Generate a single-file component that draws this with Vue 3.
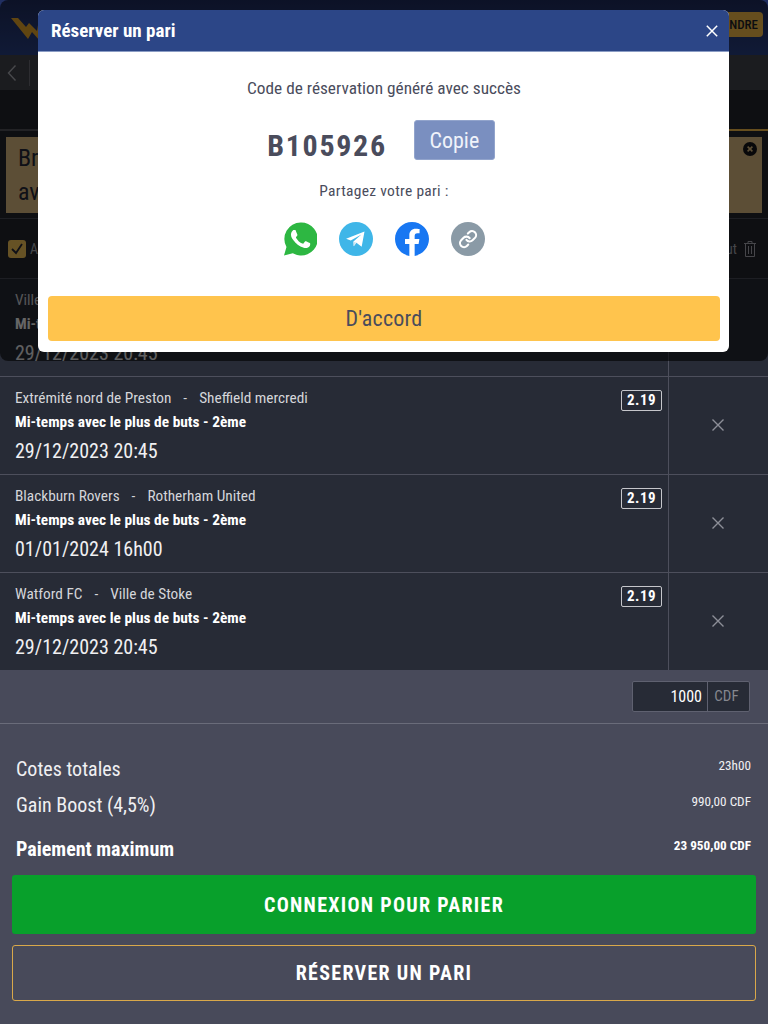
<script setup>
import {ref} from 'vue';

const bets = ref([
  {home: 'Ville de Stoke', away: 'Sheffield mercredi', date: '29/12/2023 20:45'},
  {home: 'Extrémité nord de Preston', away: 'Sheffield mercredi', date: '29/12/2023 20:45'},
  {home: 'Blackburn Rovers', away: 'Rotherham United', date: '01/01/2024 16h00'},
  {home: 'Watford FC', away: 'Ville de Stoke', date: '29/12/2023 20:45'},
]);

const stake = ref(1000);
</script>

<template>
  <div class="page">
    <header class="topbar">
      <svg class="logo" viewBox="0 0 40 24" width="40" height="24">
        <path d="M1 1h7l8 9 3-4 8 8 2-12h6l-5 22-8-9-4 7z" fill="#f0ac2c"/>
      </svg>
      <button class="join">REJOINDRE</button>
    </header>

    <div class="subbar">
      <svg class="back" viewBox="0 0 10 18" width="10" height="18">
        <path d="M8.500 1.500 1.500 9l7 7.500" fill="none" stroke="#b4b6bc" stroke-width="1.4"/>
      </svg>
      <span class="subbar__line"></span>
    </div>

    <div class="tabs">
      <div class="tab"></div>
      <div class="tab tab--active"></div>
    </div>

    <div class="notice-wrap">
      <div class="notice">
        <p>Bravo !<br>avec Boost</p>
        <svg class="notice__close" viewBox="0 0 14 14" width="14" height="14">
          <circle cx="7" cy="7" r="7" fill="#15151a"/>
          <path d="m4.600 4.600 4.800 4.800m0-4.800-4.800 4.800" stroke="#e6c387" stroke-width="1.600"/>
        </svg>
      </div>
    </div>

    <div class="options">
      <label class="accept">
        <span class="check">
          <svg viewBox="0 0 18 18" width="18" height="18">
            <path d="m4 9 4 4 6-9" fill="none" stroke="#27293a" stroke-width="1.800"/>
          </svg>
        </span>
        Accepter les changements
      </label>
      <span class="clear">
        Tout
        <svg viewBox="0 0 14 18" width="14" height="18" fill="none" stroke="#aeb0b8">
          <path d="M1 3.500h12M5 3.500V1.500h4v2M2.500 3.500v13h9v-13M5.500 6v8M8.500 6v8"/>
        </svg>
      </span>
    </div>

    <div class="bets">
      <div class="bet" v-for="(bet, i) in bets" :key="i">
        <div class="bet__main">
          <div class="bet__info">
            <div class="bet__teams">
              <span>{{ bet.home }}</span>
              <span>-</span>
              <span>{{ bet.away }}</span>
            </div>
            <div class="bet__market">Mi-temps avec le plus de buts - 2ème</div>
            <div class="bet__date">{{ bet.date }}</div>
          </div>
          <div class="odds">2.19</div>
        </div>
        <div class="bet__remove">
          <svg viewBox="0 0 14 14" width="14" height="14">
            <path d="m1.500 1.500 11 11m0-11-11 11" stroke="#8d8f98" stroke-width="1.400"/>
          </svg>
        </div>
      </div>
    </div>

    <div class="stake">
      <div class="stake__box">
        <span class="stake__value">{{ stake }}</span>
        <span class="stake__cur">CDF</span>
      </div>
    </div>

    <div class="summary">
      <div class="summary__row">
        <span>Cotes totales</span>
        <small>23h00</small>
      </div>
      <div class="summary__row">
        <span>Gain Boost (4,5%)</span>
        <small>990,00 CDF</small>
      </div>
      <div class="summary__row summary__row--bold">
        <span>Paiement maximum</span>
        <small>23 950,00 CDF</small>
      </div>
      <button class="btn btn--green">CONNEXION POUR PARIER</button>
      <button class="btn btn--outline">RÉSERVER UN PARI</button>
    </div>

    <div class="overlay"></div>

    <div class="modal">
      <div class="modal__head">
        <span>Réserver un pari</span>
        <svg viewBox="0 0 12 12" width="12" height="12">
          <path d="m.8.8 10.400 10.400m0-10.400L.8 11.200" stroke="#fff" stroke-width="1.500"/>
        </svg>
      </div>
      <div class="modal__body">
        <p class="modal__msg">Code de réservation généré avec succès</p>
        <div class="code">
          <span class="code__value">B105926</span>
          <button class="code__copy">Copie</button>
        </div>
        <p class="modal__share">Partagez votre pari :</p>
        <div class="socials">
          <svg viewBox="0 0 24 24" width="33" height="34">
            <path d="M12.100 0A12 12 0 0 0 1.800 17.900L0 24l6.400-1.700A12 12 0 1 0 12.100 0z" fill="#2db742"/>
            <path transform="translate(-1.900 -1.900) scale(1.160)" d="M17.472 14.382c-.297-.149-1.758-.867-2.03-.967-.273-.099-.471-.148-.67.15-.197.297-.767.966-.94 1.164-.173.199-.347.223-.644.075-.297-.15-1.255-.463-2.39-1.475-.883-.788-1.48-1.761-1.653-2.059-.173-.297-.018-.458.13-.606.134-.133.298-.347.446-.52.149-.174.198-.298.298-.497.099-.198.05-.371-.025-.52-.075-.149-.669-1.612-.916-2.207-.242-.579-.487-.5-.669-.51-.173-.008-.371-.01-.57-.01-.198 0-.52.074-.792.372-.272.297-1.04 1.016-1.04 2.479 0 1.462 1.065 2.875 1.213 3.074.149.198 2.096 3.2 5.077 4.487.709.306 1.262.489 1.694.625.712.227 1.36.195 1.871.118.571-.085 1.758-.719 2.006-1.413.248-.694.248-1.289.173-1.413-.074-.124-.272-.198-.57-.347z" fill="#fff"/>
          </svg>
          <svg viewBox="0 0 24 24" width="34" height="34">
            <circle cx="12" cy="12" r="12" fill="#3fb6e8"/>
            <path d="M5 11.800 18 6.700 16 17.400 12.300 14.700 10.400 17.200 10.200 13.700 15.800 8.800 8.300 13z" fill="#fff"/>
            <path d="M10.400 17.200 10.200 13.700 12.300 14.700z" fill="#cfe6f2"/>
          </svg>
          <svg viewBox="0 0 24 24" width="34" height="34">
            <circle cx="12" cy="12" r="12" fill="#fff"/>
            <path d="M24 12.073c0-6.627-5.373-12-12-12s-12 5.373-12 12c0 5.99 4.388 10.954 10.125 11.854v-8.385H7.078v-3.47h3.047V9.43c0-3.007 1.792-4.669 4.533-4.669 1.312 0 2.686.235 2.686.235v2.953H15.83c-1.491 0-1.956.925-1.956 1.874v2.25h3.328l-.532 3.47h-2.796v8.385C19.612 23.027 24 18.062 24 12.073z" fill="#1877f2"/>
          </svg>
          <svg viewBox="0 0 24 24" width="34" height="34">
            <circle cx="12" cy="12" r="12" fill="#8a9aa6"/>
            <g transform="translate(5.200 5.200) scale(.57)" fill="none" stroke="#fff" stroke-width="2.600" stroke-linecap="round">
              <path d="M10 13a5 5 0 0 0 7.540.54l3-3a5 5 0 0 0-7.070-7.070l-1.720 1.710"/>
              <path d="M14 11a5 5 0 0 0-7.540-.54l-3 3a5 5 0 0 0 7.070 7.070l1.710-1.710"/>
            </g>
          </svg>
        </div>
        <button class="modal__ok">D'accord</button>
      </div>
    </div>
  </div>
</template>

<style>
html, body {
  margin: 0;
  background: #484a5a;
}
</style>

<style scoped>
* {
  box-sizing: border-box;
}

.page {
  position: relative;
  width: 768px;
  height: 1024px;
  overflow: hidden;
  display: flex;
  flex-direction: column;
  background: #484a5a;
  color: #fff;
  font-family: "Roboto Condensed", "Liberation Sans Narrow", Roboto, sans-serif;
  font-stretch: condensed;
}

button {
  font-family: inherit;
  font-stretch: inherit;
  border: none;
}

p {
  margin: 0;
}

.topbar {
  height: 55px;
  flex: none;
  display: flex;
  align-items: flex-start;
  justify-content: space-between;
  padding: 12px 5px 0 10px;
  background: linear-gradient(180deg, #202e60 0%, #2a4288 100%);
}

.join {
  width: 80px;
  height: 25px;
  border-radius: 4px;
  background: #ffc44d;
  color: #1e1e28;
  font-size: 13px;
  font-weight: 500;
  padding: 0 5px 0 0;
  text-align: right;
}

.logo {
  margin-top: 5px;
}

.subbar {
  height: 35px;
  flex: none;
  display: flex;
  align-items: center;
  padding-left: 7px;
  gap: 12px;
  background: #44464f;
}

.subbar__line {
  width: 1px;
  height: 26px;
  background: #70727a;
}

.tabs {
  height: 41px;
  flex: none;
  display: flex;
  background: #23262f;
}

.tab {
  flex: 1;
  border-bottom: 2px solid #55565e;
}

.tab--active {
  border-bottom-color: #ffc44d;
}

.notice-wrap {
  height: 88px;
  flex: none;
  padding: 6px 6px 0;
  background: #23262f;
  border-bottom: 1px solid #4a4c58;
}

.notice {
  position: relative;
  height: 76px;
  padding: 4px 12px;
  background: #e6c387;
  color: #27293a;
  font-size: 24px;
  line-height: 34px;
}

.notice__close {
  position: absolute;
  top: 5px;
  right: 5px;
}

.options {
  height: 60px;
  flex: none;
  display: flex;
  align-items: center;
  justify-content: space-between;
  padding: 0 11px 0 8px;
  background: #23262f;
  border-bottom: 1px solid #4a4c58;
  font-size: 14px;
  color: #aeb0b8;
}

.accept {
  display: flex;
  align-items: center;
  gap: 4px;
}

.check {
  width: 18px;
  height: 18px;
  border-radius: 3px;
  background: #ffce5c;
  display: flex;
}

.clear {
  display: flex;
  align-items: center;
  gap: 6px;
}

.bets {
  flex: none;
  background: #272b36;
}

.bet {
  height: 98px;
  display: flex;
  border-bottom: 1px solid #4d4f5c;
}

.bet:last-child {
  height: 97px;
  border-bottom: none;
}

.bet__main {
  width: 669px;
  display: flex;
  justify-content: space-between;
  align-items: flex-start;
  padding: 11px 6px 0 15px;
  border-right: 1px solid #4d4f5c;
}

.bet__teams {
  display: flex;
  gap: 12px;
  font-size: 15.300px;
  line-height: 20px;
  color: #d5d6da;
}

.bet__market {
  margin-top: 4px;
  font-size: 15.400px;
  font-weight: 700;
  line-height: 20px;
}

.bet__date {
  margin-top: 5px;
  font-size: 20px;
  line-height: 28px;
  color: #f0f0f2;
}

.odds {
  width: 41px;
  height: 21px;
  margin-top: 2px;
  border: 1px solid #c5c6cb;
  border-radius: 2px;
  font-size: 15px;
  font-weight: 700;
  line-height: 19px;
  letter-spacing: .5px;
  text-align: center;
}

.bet__remove {
  flex: 1;
  display: flex;
  align-items: center;
  justify-content: center;
  padding-right: 1px;
  padding-bottom: 2px;
}

.stake {
  height: 54px;
  flex: none;
  display: flex;
  justify-content: flex-end;
  align-items: flex-start;
  padding: 11px 18px 0 0;
  border-bottom: 1px solid #6a6c7a;
}

.stake__box {
  width: 118px;
  height: 31px;
  display: flex;
  background: #272b36;
  border: 1px solid #5f6170;
  border-radius: 2px;
  line-height: 29px;
}

.stake__value {
  width: 75px;
  padding-right: 5px;
  text-align: right;
  font-size: 16px;
  border-right: 1px solid #5f6170;
}

.stake__cur {
  flex: 1;
  padding-right: 4px;
  text-align: center;
  font-size: 15px;
  color: #85878f;
}

.summary {
  flex: 1;
  padding: 27px 12px 0;
  display: flex;
  flex-direction: column;
}

.summary__row {
  height: 36px;
  display: flex;
  justify-content: space-between;
  padding: 0 5px 0 4px;
  font-size: 20px;
  line-height: 36px;
  color: #f0f0f2;
}

.summary__row small {
  font-size: 13.200px;
  line-height: 29px;
}

.summary__row--bold {
  margin-top: 8px;
  font-weight: 700;
  color: #fff;
}

.btn {
  width: 100%;
  color: #fff;
  font-size: 20px;
  font-weight: 700;
  letter-spacing: 1.300px;
  border-radius: 3px;
}

.btn--green {
  height: 59px;
  margin-top: 8px;
  background: #08a02b;
}

.btn--outline {
  height: 56px;
  margin-top: 11px;
  background: transparent;
  border: 1px solid #d9a84a;
}

.overlay {
  position: absolute;
  top: 0;
  left: 0;
  right: 0;
  height: 361px;
  border-radius: 8px;
  background: rgba(0, 0, 0, .6);
}

.modal {
  position: absolute;
  top: 10px;
  left: 38px;
  width: 691px;
  height: 342px;
  border-radius: 6px;
  overflow: hidden;
  background: #fff;
}

.modal__head {
  height: 42px;
  display: flex;
  align-items: center;
  justify-content: space-between;
  padding: 0 11px 0 13px;
  background: #2c4687;
  border-bottom: 1px solid #8a9cc4;
  font-size: 19px;
  font-weight: 700;
}

.modal__body {
  display: flex;
  flex-direction: column;
  align-items: center;
  padding: 24px 9px 0 10px;
  color: #4a4c5c;
}

.modal__msg {
  font-size: 17.300px;
  line-height: 24px;
}

.code {
  display: flex;
  align-items: flex-start;
  gap: 27px;
  margin-top: 20px;
  padding-right: 6px;
}

.code__value {
  font-size: 30px;
  font-weight: 700;
  letter-spacing: 1.700px;
  line-height: 52px;
}

.code__copy {
  width: 81px;
  height: 40px;
  padding: 0;
  background: #7a8fc0;
  border: 1px solid #92a4cc;
  border-radius: 3px;
  color: #f0f3fa;
  font-size: 22px;
}

.modal__share {
  margin-top: 8px;
  font-size: 15.500px;
  line-height: 22px;
  letter-spacing: .3px;
}

.socials {
  display: flex;
  gap: 22px;
  margin-top: 20px;
}

.modal__ok {
  width: 100%;
  height: 45px;
  margin-top: 40px;
  background: #ffc44d;
  border-radius: 4px;
  color: #4a4c5c;
  font-size: 22px;
  letter-spacing: .2px;
}
</style>
